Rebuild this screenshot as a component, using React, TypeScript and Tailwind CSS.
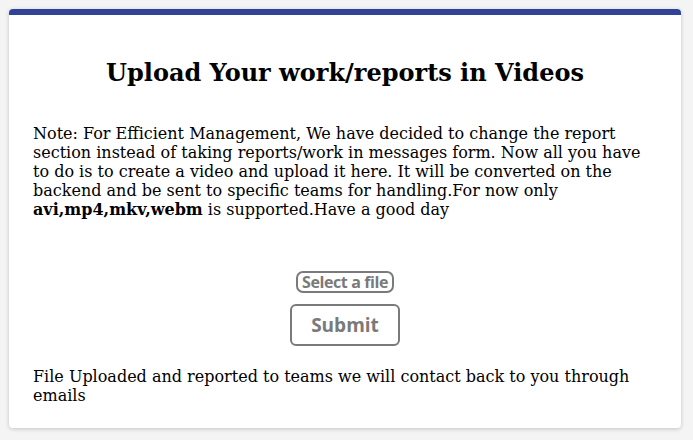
export default function App() {
  return (
    <div className="min-h-[440px] bg-[#f4f4f4] pt-[9px] pl-[9px]">
      <div className="w-[672px] h-[419px] bg-white rounded-[4px] shadow-[0_1px_4px_rgba(0,0,0,0.2)] overflow-hidden font-['DejaVu_Serif',serif] text-black">
        {/* Top accent bar */}
        <div className="h-[6px] bg-[#304399]"></div>

        <div className="px-6">
          <h1 className="pt-[44px] text-center text-[24px] leading-[28px] font-bold">
            Upload Your work/reports in Videos
          </h1>

          <p className="mt-[37px] text-[16px] leading-[19px]">
            Note: For Efficient Management, We have decided to change the report section instead of taking
            reports/work in messages form. Now all you have to do is to create a video and upload it here. It
            will be converted on the backend and be sent to specific teams for handling.For now only{" "}
            <b>avi,mp4,mkv,webm</b> is supported.Have a good day
          </p>

          <div className="mt-[52px] flex flex-col items-center gap-[11px] font-['Open_Sans',sans-serif] font-bold text-[#7a7a7a]">
            <button className="h-[22px] w-[98px] border-2 border-[#7a7a7a] rounded-[7px] text-[16px] leading-none tracking-[-0.4px]">
              Select a file
            </button>
            <button className="h-[42px] w-[110px] border-2 border-[#7a7a7a] rounded-[6px] text-[19px] leading-none">
              Submit
            </button>
          </div>

          <p className="mt-[21px] text-[16px] leading-[19px]">
            File Uploaded and reported to teams we will contact back to you through emails
          </p>
        </div>
      </div>
    </div>
  );
}
